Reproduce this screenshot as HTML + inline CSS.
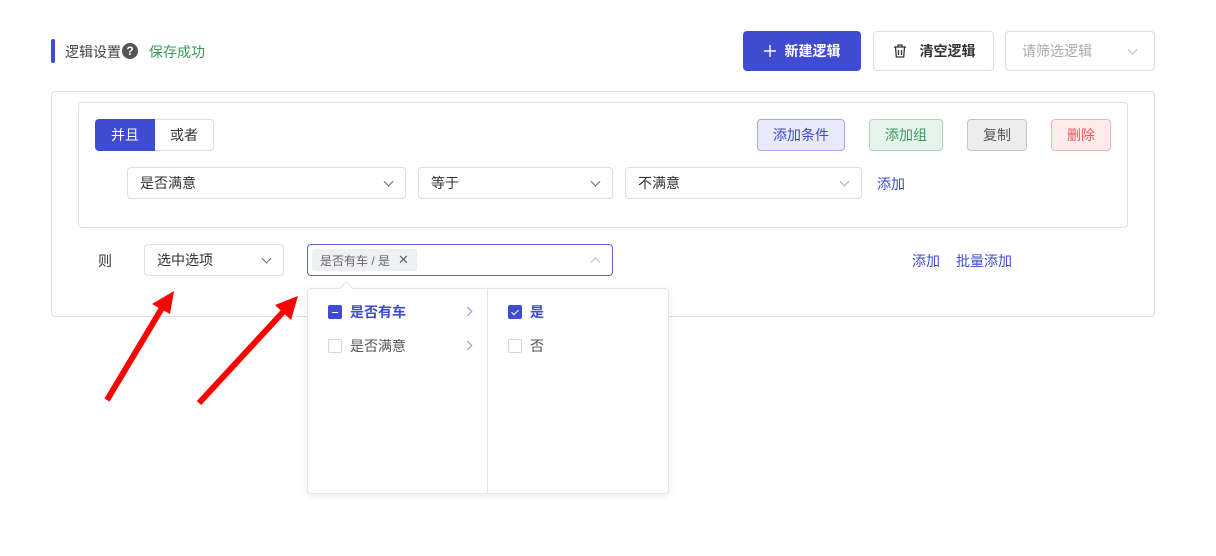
<!DOCTYPE html>
<html><head><meta charset="utf-8"><style>
*{box-sizing:border-box;margin:0;padding:0}
body{width:1216px;height:556px;background:#fff;font-family:"Liberation Sans","Noto Sans CJK SC",sans-serif;font-size:14px;color:#333;position:relative;overflow:hidden}
.a{position:absolute}
.box{position:absolute;border:1px solid #dcdde6;border-radius:4px;background:#fff}
.btn{position:absolute;border-radius:4px;display:flex;align-items:center;justify-content:center;font-size:14px}
.sel{position:absolute;border:1px solid #dcdde6;border-radius:4px;background:#fff;display:flex;align-items:center;padding-left:12px;font-size:14px;color:#333}
.chev{position:absolute;right:13px;top:50%;width:7px;height:7px;border-right:1.2px solid #666;border-bottom:1.2px solid #666;transform:translateY(-70%) rotate(45deg)}
.cb{position:absolute;width:14px;height:14px;border:1px solid #d4d6de;border-radius:2px;background:#fff}
.cbon{background:#3f4bd1;border-color:#3f4bd1}
.link{position:absolute;color:#3f4bd1;font-size:14px}
</style></head><body>
<div class="a" style="left:51px;top:39px;width:4px;height:24px;background:#3f4bd1;border-radius:2px"></div>
<div class="a" style="left:65px;top:42px;color:#444">逻辑设置</div>
<div class="a" style="left:122px;top:43px;width:16px;height:16px;border-radius:50%;background:#555;color:#fff;font-size:12px;font-weight:bold;text-align:center;line-height:16px">?</div>
<div class="a" style="left:149px;top:42px;color:#3a9a5b">保存成功</div>

<div class="btn" style="left:743px;top:31px;width:118px;height:40px;background:#3f4bd1;color:#fff;font-weight:bold"><svg width="12" height="12" viewBox="0 0 12 12" style="margin-right:9px"><path d="M6 0v12M0 6h12" stroke="#fff" stroke-width="1.4"/></svg>新建逻辑</div>
<div class="btn" style="left:873px;top:31px;width:121px;height:40px;border:1px solid #dcdde6;color:#333;font-weight:bold">
<svg width="16" height="16" viewBox="0 0 16 16" style="margin-right:12px" fill="none" stroke="#333" stroke-width="1.3"><path d="M2 4h12M6 4V2h4v2M3.5 4l.8 10h7.4l.8-10M6.5 7v5M9.5 7v5"/></svg>清空逻辑</div>
<div class="sel" style="left:1005px;top:31px;width:150px;height:40px;color:#aaa;padding-left:16px">请筛选逻辑<span class="chev" style="border-color:#bbb;right:18px"></span></div>

<div class="box" style="left:51px;top:91px;width:1104px;height:226px"></div>
<div class="box" style="left:78px;top:102px;width:1050px;height:126px"></div>

<div class="btn" style="left:95px;top:119px;width:60px;height:32px;background:#3f4bd1;color:#fff;border-radius:4px 0 0 4px">并且</div>
<div class="btn" style="left:155px;top:119px;width:59px;height:32px;border:1px solid #dcdde6;border-left:none;border-radius:0 4px 4px 0;color:#333">或者</div>

<div class="btn" style="left:757px;top:119px;width:88px;height:32px;background:#e8e9fb;border:1px solid #a3a8ee;color:#3f4bd1">添加条件</div>
<div class="btn" style="left:869px;top:119px;width:74px;height:32px;background:#e7f4ec;border:1px solid #a7d7b8;color:#3a9a5b">添加组</div>
<div class="btn" style="left:967px;top:119px;width:60px;height:32px;background:#ededed;border:1px solid #c4c4c4;color:#555">复制</div>
<div class="btn" style="left:1051px;top:119px;width:60px;height:32px;background:#fdecec;border:1px solid #f7b2b2;color:#f05656">删除</div>

<div class="sel" style="left:127px;top:167px;width:279px;height:32px">是否满意<span class="chev"></span></div>
<div class="sel" style="left:418px;top:167px;width:195px;height:32px">等于<span class="chev"></span></div>
<div class="sel" style="left:625px;top:167px;width:237px;height:32px">不满意<span class="chev" style="border-color:#aaa"></span></div>
<div class="link" style="left:877px;top:174px">添加</div>

<div class="a" style="left:98px;top:251px">则</div>
<div class="sel" style="left:144px;top:244px;width:140px;height:32px">选中选项<span class="chev"></span></div>
<div class="sel" style="left:307px;top:244px;width:306px;height:32px;border-color:#5a64da;padding-left:4px">
<span style="background:#eef0f4;border-radius:3px;height:22px;padding:0 8px;display:flex;align-items:center;font-size:12px;color:#666">是否有车 / 是<span style="margin-left:8px;font-size:13px">✕</span></span>
<span class="chev" style="border-color:#bbb;transform:translateY(-20%) rotate(225deg)"></span></div>
<div class="link" style="left:912px;top:251px">添加</div>
<div class="link" style="left:956px;top:251px">批量添加</div>

<div class="a" style="left:307px;top:288px;width:362px;height:206px;border:1px solid #e4e5ea;border-radius:4px;background:#fff;box-shadow:0 2px 8px rgba(0,0,0,.08)"></div>
<div class="a" style="left:342px;top:283px;width:9px;height:9px;background:#fff;border-left:1px solid #e4e5ea;border-top:1px solid #e4e5ea;transform:rotate(45deg)"></div>
<div class="a" style="left:487px;top:289px;width:1px;height:204px;background:#e4e5ea"></div>
<div class="cb cbon" style="left:328px;top:305px"><div style="position:absolute;left:3px;top:5.5px;width:6px;height:1.5px;background:#fff"></div></div>
<div class="a" style="left:350px;top:302px;color:#3f4bd1;font-weight:bold">是否有车</div>
<div class="a" style="left:464px;top:308px;width:7px;height:7px;border-right:1.2px solid #8c93e6;border-top:1.2px solid #8c93e6;transform:rotate(45deg)"></div>
<div class="cb" style="left:328px;top:339px"></div>
<div class="a" style="left:350px;top:336px;color:#555">是否满意</div>
<div class="a" style="left:464px;top:342px;width:7px;height:7px;border-right:1.2px solid #999;border-top:1.2px solid #999;transform:rotate(45deg)"></div>
<div class="cb cbon" style="left:508px;top:305px"><div style="position:absolute;left:4px;top:1.5px;width:4px;height:7px;border-right:1.5px solid #fff;border-bottom:1.5px solid #fff;transform:rotate(45deg)"></div></div>
<div class="a" style="left:530px;top:302px;color:#3f4bd1;font-weight:bold">是</div>
<div class="cb" style="left:508px;top:339px"></div>
<div class="a" style="left:530px;top:336px;color:#555">否</div>

<svg class="a" style="left:0;top:0" width="1216" height="556">
<g stroke="#f00" stroke-width="6" fill="#f00">
<line x1="107" y1="400" x2="162" y2="308"/>
<line x1="199" y1="403" x2="284" y2="311"/>
</g>
<polygon points="174,291 152,304 170,314" fill="#f00"/>
<polygon points="298,296 275,305 291,320" fill="#f00"/>
</svg>
</body></html>
